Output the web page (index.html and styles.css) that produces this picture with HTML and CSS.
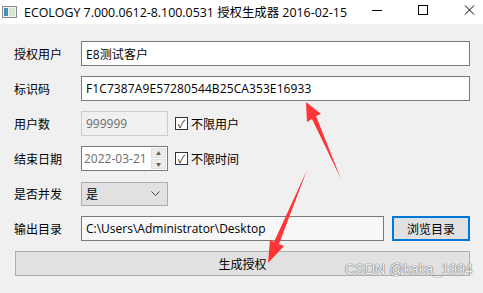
FILE: index.html
```html
<!DOCTYPE html>
<html lang="zh-CN">
<head>
  <meta charset="UTF-8" />
  <title>ECOLOGY 授权生成器</title>
  <link rel="stylesheet" href="styles.css">
</head>
<body>
  <div class="window">
    <div class="titlebar">
      <svg class="app-icon" width="15" height="12" viewBox="0 0 15 12">
        <rect x="0.5" y="0.5" width="14" height="11" fill="#f4f4f4" stroke="#8a8a8a"/>
        <rect x="2" y="2" width="4" height="8" fill="#4a8fb8"/>
        <rect x="7" y="2" width="6" height="8" fill="#d8e6d0"/>
      </svg>
      <span class="title">ECOLOGY 7.000.0612-8.100.0531 授权生成器 2016-02-15</span>
      <div class="controls">
        <svg width="46" height="24" viewBox="0 0 46 24"><path d="M18 10.5h10" stroke="#000" stroke-width="1"/></svg>
        <svg width="46" height="24" viewBox="0 0 46 24"><rect x="18.5" y="5.5" width="9" height="9" fill="none" stroke="#000"/></svg>
        <svg width="46" height="24" viewBox="0 0 46 24"><path d="M19 5.5l9 9M28 5.5l-9 9" stroke="#000" stroke-width="1"/></svg>
      </div>
    </div>

    <div class="form">
      <div class="row">
        <label>授权用户</label>
        <div class="field wide">E8测试客户</div>
      </div>
      <div class="row">
        <label>标识码</label>
        <div class="field wide">F1C7387A9E57280544B25CA353E16933</div>
      </div>
      <div class="row">
        <label>用户数</label>
        <div class="field short disabled">999999</div>
        <span class="check"><span class="box">✓</span>不限用户</span>
      </div>
      <div class="row">
        <label>结束日期</label>
        <div class="field short date">
          <span>2022-03-21</span>
          <span class="spin">
            <span class="spin-btn">▲</span>
            <span class="spin-btn">▼</span>
          </span>
        </div>
        <span class="check"><span class="box">✓</span>不限时间</span>
      </div>
      <div class="row">
        <label>是否并发</label>
        <div class="select">
          <span>是</span>
          <svg width="9" height="5" viewBox="0 0 9 5"><path d="M0.5 0.5l4 4 4-4" fill="none" stroke="#444"/></svg>
        </div>
      </div>
      <div class="row">
        <label>输出目录</label>
        <div class="field path">C:\Users\Administrator\Desktop</div>
        <button class="btn browse">浏览目录</button>
      </div>
      <button class="btn generate">生成授权</button>
    </div>

    <div class="watermark">CSDN @kaka_1994</div>
    <svg class="arrows" width="483" height="293" viewBox="0 0 483 293">
      <polygon fill="#ff3434" points="306,102 307,122 312,119 341,179 316,116 321,114"/>
      <polygon fill="#ff3434" points="268,263 284,246 279,244 307,170 274,242 270,240"/>
    </svg>
  </div>
</body>
</html>
```

FILE: styles.css
```css
body {
  margin: 0;
  font-family: "Open Sans", "Noto Sans CJK SC", sans-serif;
  font-size: 12px;
  color: #000;
  background-color: #f0f0f0;
}
.window {
  position: relative;
  width: 483px;
  height: 293px;
  overflow: hidden;
}
.titlebar {
  height: 24px;
  background-color: #fff;
  display: flex;
  align-items: center;
}
.app-icon {
  margin: 0 7px 0 2px;
}
.title {
  flex: 1;
  white-space: nowrap;
  font-size: 12.4px;
}
.controls {
  display: flex;
  margin-right: -9px;
}
.form {
  padding: 17px 13px 0 14px;
}
.row {
  display: flex;
  align-items: center;
  height: 25px;
  margin-bottom: 10px;
}
label {
  width: 67px;
  flex: none;
}
.field {
  height: 25px;
  box-sizing: border-box;
  border: 1px solid #7a7a7a;
  background-color: #fff;
  padding: 0 4px;
  display: flex;
  align-items: center;
  white-space: nowrap;
}
.wide {
  flex: 1;
  letter-spacing: 0.1px;
}
.short {
  width: 87px;
}
.disabled {
  background-color: #f0f0f0;
  border-color: #cccccc;
  color: #6d6d6d;
}
.date {
  padding: 0 1px 0 2px;
  justify-content: space-between;
  color: #6d6d6d;
}
.spin {
  display: flex;
  flex-direction: column;
  gap: 1px;
}
.spin-btn {
  width: 15px;
  height: 10px;
  background-color: #ececec;
  border: 1px solid #e0e0e0;
  box-sizing: border-box;
  color: #606060;
  font-size: 5px;
  line-height: 8px;
  text-align: center;
}
.check {
  display: flex;
  align-items: center;
  margin-left: 7px;
}
.box {
  width: 13px;
  height: 13px;
  box-sizing: border-box;
  border: 1px solid #333;
  background-color: #fff;
  margin-right: 3px;
  font-size: 11px;
  line-height: 11px;
  text-align: center;
  color: #333;
}
.select {
  width: 87px;
  height: 24px;
  box-sizing: border-box;
  border: 1px solid #adadad;
  background-color: #e1e1e1;
  display: flex;
  align-items: center;
  justify-content: space-between;
  padding: 0 7px 0 4px;
}
.path {
  width: 303px;
  background-color: #f7f7f7;
}
.btn {
  font-family: "Open Sans", "Noto Sans CJK SC", sans-serif;
  font-size: 12px;
  color: #000;
  background-color: #e1e1e1;
  box-sizing: border-box;
  height: 25px;
  padding: 0;
}
.browse {
  margin-left: 8px;
  flex: 1;
  border: 2px solid #0078d7;
}
.generate {
  display: block;
  width: 455px;
  margin-left: 1px;
  margin-top: 5px;
  border: 1px solid #adadad;
}
.watermark {
  position: absolute;
  left: 345px;
  top: 261px;
  white-space: nowrap;
  font-family: "Liberation Sans", sans-serif;
  font-size: 14.2px;
  color: rgba(255, 255, 255, 0.9);
  text-shadow: 0 0 1px #777, 0 0 1px #777, 0 0 1px #999;
}
.arrows {
  position: absolute;
  left: 0;
  top: 0;
}
```
